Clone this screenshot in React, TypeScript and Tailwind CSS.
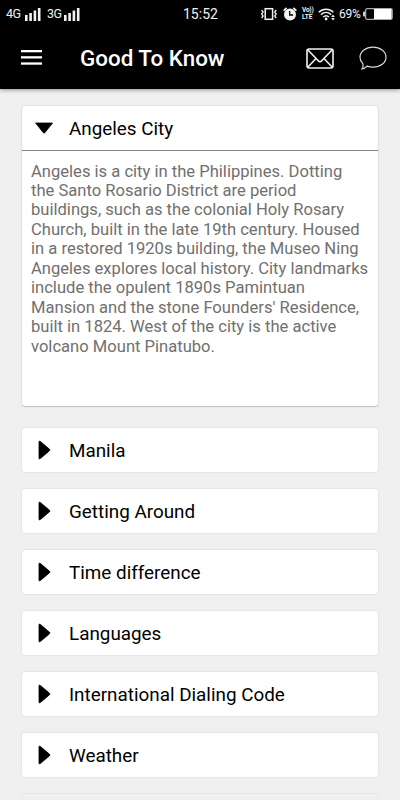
import { clsx } from 'clsx';

interface Topic {
  id: string;
  title: string;
  lines?: string[];
}

const topics: Topic[] = [
  {
    id: 'angeles',
    title: 'Angeles City',
    lines: [
      'Angeles is a city in the Philippines. Dotting',
      'the Santo Rosario District are period',
      'buildings, such as the colonial Holy Rosary',
      'Church, built in the late 19th century. Housed',
      'in a restored 1920s building, the Museo Ning',
      'Angeles explores local history. City landmarks',
      'include the opulent 1890s Pamintuan',
      "Mansion and the stone Founders' Residence,",
      'built in 1824. West of the city is the active',
      'volcano Mount Pinatubo.',
    ],
  },
  { id: 'manila', title: 'Manila' },
  { id: 'getting-around', title: 'Getting Around' },
  { id: 'time', title: 'Time difference' },
  { id: 'languages', title: 'Languages' },
  { id: 'dialing', title: 'International Dialing Code' },
  { id: 'weather', title: 'Weather' },
];

function SignalBars() {
  return (
    <svg width="16" height="13" viewBox="0 0 16 13" fill="#f2f2f2" className="shrink-0">
      <rect x="0" y="7" width="2.6" height="6" />
      <rect x="4.3" y="5" width="2.6" height="8" />
      <rect x="8.6" y="2.5" width="2.6" height="10.5" />
      <rect x="12.9" y="0" width="2.6" height="13" />
    </svg>
  );
}

function VibrateIcon() {
  return (
    <svg width="17" height="14" viewBox="0 0 17 14" fill="none" stroke="#f2f2f2" className="shrink-0">
      <rect x="4.2" y="1.7" width="7.4" height="10.6" strokeWidth="1.5" />
      <path d="M.6 3l1.5 2L.6 7l1.5 2L.6 11M15.2 3l-1.5 2 1.5 2-1.5 2 1.5 2" strokeWidth="1.3" />
    </svg>
  );
}

function AlarmIcon() {
  return (
    <svg width="14" height="14" viewBox="0 0 14 14" className="block shrink-0">
      <circle cx="7" cy="7.4" r="6" fill="#f5f5f5" />
      <path d="M.6 3.6L3.7.8M13.4 3.6L10.3.8" stroke="#f5f5f5" strokeWidth="1.6" />
      <path d="M6.7 4v4h3.4" fill="none" stroke="#000" strokeWidth="1.3" />
    </svg>
  );
}

function WifiIcon() {
  return (
    <svg width="18" height="13" viewBox="0 0 18 13" fill="none" stroke="#f2f2f2" className="block shrink-0">
      <path d="M.8 4.2C5 .1 11.2.1 15.4 4.2M3 6.6c3-2.8 7.2-2.8 10.2 0M5.2 9c1.8-1.6 4-1.6 5.8 0" strokeWidth="1.5" />
      <circle cx="8.1" cy="11" r="1.4" fill="#f2f2f2" stroke="none" />
      <path d="M15 6.6l1.8 2.5h-3.6zM15 12.5l1.8-2.5h-3.6z" fill="#f2f2f2" stroke="none" />
    </svg>
  );
}

function BatteryIcon() {
  return (
    <svg width="30" height="12" viewBox="0 0 30 12" className="mr-px shrink-0">
      <rect x="0" y="3.5" width="3" height="5" rx="1" fill="#d0d0d0" />
      <rect x="2.6" y=".7" width="26.6" height="10.6" rx="1.5" fill="#000" stroke="#aaa" strokeWidth="1.3" />
      <rect x="11" y="1" width="17.6" height="10" fill="#fff" />
    </svg>
  );
}

function StatusBar() {
  return (
    <div className="flex h-7 items-center pl-1.5 pr-[5px] text-xs text-[#f2f2f2]">
      <span className="w-[19px] text-[12.5px] tracking-[-0.6px]">4G</span>
      <SignalBars />
      <span className="ml-[6px] w-[17px] text-[12.5px] tracking-[-0.6px]">3G</span>
      <SignalBars />
      <span className="ml-[103px] w-[78px] text-[14px] leading-none">15:52</span>
      <VibrateIcon />
      <span className="ml-[5px]">
        <AlarmIcon />
      </span>
      <span className="ml-[5px] flex w-[13px] flex-col text-[6.5px] font-bold">
        <span className="leading-[7px] tracking-[-0.2px]">Vo))</span>
        <span className="leading-[7px]">LTE</span>
      </span>
      <span className="ml-[3px]">
        <WifiIcon />
      </span>
      <span className="ml-[3px] w-6 text-[12px] tracking-[-0.3px]">69%</span>
      <BatteryIcon />
    </div>
  );
}

function AppBar() {
  return (
    <div className="flex h-15 items-center pl-[21px] pr-[13px]">
      <button aria-label="Menu" className="mb-px">
        <svg width="21" height="15" viewBox="0 0 21 15" fill="#fff" className="block">
          <rect y="0" width="21" height="2.3" />
          <rect y="6.2" width="21" height="2.3" />
          <rect y="12.4" width="21" height="2.3" />
        </svg>
      </button>
      <h1 className="ml-[38px] mt-px text-[22.4px] font-medium leading-none text-white">Good To Know</h1>
      <button aria-label="Messages" className="ml-auto">
        <svg width="28" height="21" viewBox="0 0 28 21" fill="none" stroke="#f2f2f2" strokeWidth="1.6" className="block">
          <rect x="1" y="1" width="26" height="19" rx="2" />
          <path d="M1.5 1.5l10.8 11.3q1.7 1.6 3.4 0L26.5 1.5M1.5 19.5l8.5-9M26.5 19.5l-8.5-9" />
        </svg>
      </button>
      <button aria-label="Chat" className="ml-[25px] mb-px">
        <svg width="28" height="24" viewBox="0 0 28 24" fill="none" stroke="#d8d8d8" strokeWidth="1.2" className="block">
          <path d="M4 17.8C2.2 16 1 13.6 1 11.2 1 5.6 6.8 1.2 14 1.2s13 4.4 13 10-5.8 10-13 10c-2.2 0-4.2-.4-6-1.1-1.2 1.4-2.7 2.5-5 2.9 1-1.5 1.3-3.2 1-5.2z" />
        </svg>
      </button>
    </div>
  );
}

function Caret({ open }: { open: boolean }) {
  return (
    <svg width="20" height="20" viewBox="0 0 20 20" className="shrink-0">
      <path
        d={open ? 'M1.6 5h17L10.8 14.8q-.7.7-1.4 0z' : 'M5 1.8Q5 .4 6.4 1.5L15.6 9.3q.8.7 0 1.4L6.4 18.5Q5 19.6 5 18.2z'}
        stroke="#000"
        strokeWidth=".8"
        strokeLinejoin="round"
      />
    </svg>
  );
}

function TopicCard({ topic }: { topic: Topic }) {
  const open = Boolean(topic.lines);

  return (
    <section
      className={clsx(
        'rounded-[3px] bg-white',
        open
          ? 'mb-[22px] h-[300px] shadow-[0_0_2px_rgba(0,0,0,0.2),0_1px_1px_rgba(0,0,0,0.15)]'
          : 'mb-[17px] h-11 shadow-[0_0_2px_rgba(0,0,0,0.15)]'
      )}
    >
      <div className={clsx('flex items-center pl-3', open ? 'h-[45px] border-b border-[#858585]' : 'h-11')}>
        <Caret open={open} />
        <h2 className="ml-[15px] mt-px text-[18.85px] leading-5 text-black">{topic.title}</h2>
      </div>
      {topic.lines ? (
        <p className="whitespace-nowrap pl-[9px] pt-[10.5px] text-[16.58px] leading-[19.45px] text-[#707070]">
          {topic.lines.map((line) => (
            <span key={line} className="block">
              {line}
            </span>
          ))}
        </p>
      ) : null}
    </section>
  );
}

export default function App() {
  return (
    <div className="h-[800px] w-[400px] overflow-hidden bg-[#f0f0f0] font-['Roboto',sans-serif]">
      <header className="relative h-[89px] bg-black shadow-[0_1px_4px_rgba(0,0,0,0.4)]">
        <StatusBar />
        <AppBar />
      </header>
      <main className="px-[22px] pt-[17px]">
        {topics.map((topic) => (
          <TopicCard key={topic.id} topic={topic} />
        ))}
        <div className="h-11 rounded-[3px] bg-[#f0f0f0] shadow-[0_0_2px_rgba(0,0,0,0.12)]" />
      </main>
    </div>
  );
}
